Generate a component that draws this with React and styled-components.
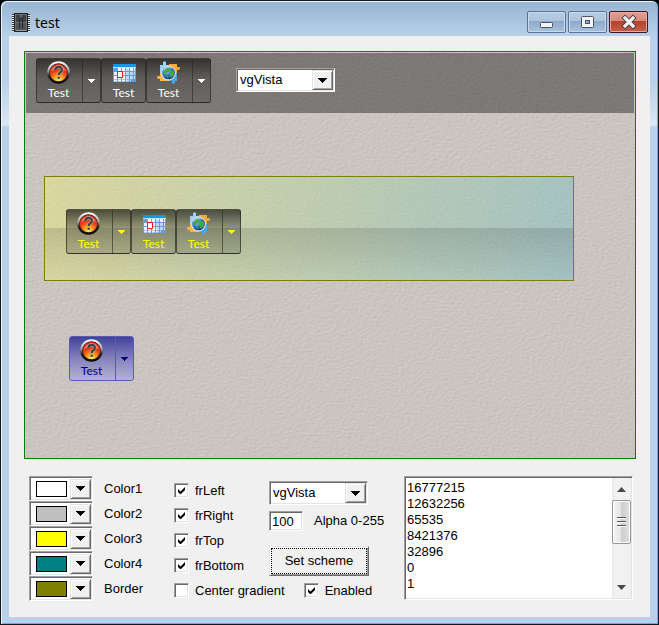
import React from "react";
import styled, { createGlobalStyle, css } from "styled-components";

const COLORS = [
  { label: "Color1", value: "#ffffff" },
  { label: "Color2", value: "#c0c0c0" },
  { label: "Color3", value: "#ffff00" },
  { label: "Color4", value: "#008080" },
  { label: "Border", value: "#808000" },
];

const FRAMES = ["frLeft", "frRight", "frTop", "frBottom"];

const MEMO = "16777215\n12632256\n65535\n8421376\n32896\n0\n1";

const App = () => {
  return (
    <Window>
      <GlobalStyle />
      <TitleBar>
        <ChipIcon />
        <Title>test</Title>
        <CaptionButton aria-label="Minimize">
          <svg width="16" height="16" viewBox="0 0 16 16">
            <rect x="1.500" y="8.500" width="12" height="5" rx="1" fill="#f4f4f4" stroke="#4b5260" />
          </svg>
        </CaptionButton>
        <CaptionButton aria-label="Maximize">
          <svg width="16" height="16" viewBox="0 0 16 16">
            <rect x="1.500" y="2.500" width="12" height="11" rx="1" fill="#f4f4f4" stroke="#4b5260" />
            <rect x="5.500" y="6.500" width="4" height="3" fill="#8fabc9" stroke="#4b5260" />
          </svg>
        </CaptionButton>
        <CaptionButton aria-label="Close" $close>
          <svg width="16" height="16" viewBox="0 0 16 16">
            <path d="M4 4L12 12M12 4L4 12" stroke="#4a3a44" strokeWidth="5" strokeLinecap="square" />
            <path d="M4 4L12 12M12 4L4 12" stroke="#f3f3f3" strokeWidth="3.200" strokeLinecap="square" />
          </svg>
        </CaptionButton>
      </TitleBar>
      <Client>
        <Stage>
          <Texture />
          <TopBar>
            <Toolbar />
            <Combo name="Toolbar scheme" />
          </TopBar>
          <GlassPanel>
            <Toolbar color="#ffff00" />
          </GlassPanel>
          <Single>
            <ToolButton icon={<HelpIcon />} drop blue color="#000080" />
          </Single>
        </Stage>
        <Form>
          <ColorList>
            {COLORS.map((color) => (
              <ColorRow key={color.label}>
                <ColorBox id={color.label} aria-labelledby={`${color.label}-text`}>
                  <Swatch $color={color.value} />
                  <DropFace>
                    <Arrow />
                  </DropFace>
                </ColorBox>
                <label id={`${color.label}-text`} htmlFor={color.label}>
                  {color.label}
                </label>
              </ColorRow>
            ))}
          </ColorList>
          <Options>
            <OptionsTop>
              <FrameList>
                {FRAMES.map((name) => (
                  <Check key={name} label={name} checked />
                ))}
              </FrameList>
              <Scheme>
                <Combo name="Scheme" />
                <AlphaRow>
                  <AlphaInput id="alpha" defaultValue="100" />
                  <label htmlFor="alpha">Alpha 0-255</label>
                </AlphaRow>
                <SetButton>
                  <Focus>Set scheme</Focus>
                </SetButton>
              </Scheme>
            </OptionsTop>
            <OptionsBottom>
              <Check label="Center gradient" />
              <Check label="Enabled" checked />
            </OptionsBottom>
          </Options>
          <Memo>
            <MemoText aria-label="Values" defaultValue={MEMO} />
            <ScrollBar>
              <ScrollArrow />
              <Thumb>
                <svg width="10" height="12" viewBox="0 0 10 12">
                  <path d="M0 1.500H9M0 5.500H9M0 9.500H9" stroke="#555" />
                  <path d="M0 2.500H9M0 6.500H9M0 10.500H9" stroke="#fff" />
                </svg>
              </Thumb>
              <ScrollArrow down />
            </ScrollBar>
          </Memo>
        </Form>
      </Client>
    </Window>
  );
};

export default App;

const Toolbar = ({ color = "#ffffff" }) => (
  <ToolRow>
    <ToolButton icon={<HelpIcon />} drop color={color} />
    <ToolButton icon={<CalendarIcon />} color={color} />
    <ToolButton icon={<PuzzleIcon />} drop color={color} />
  </ToolRow>
);

const ToolButton = ({ icon, drop, blue, color }) => (
  <ToolFrame $blue={blue}>
    <ToolMain $color={color} $drop={drop}>
      {icon}
      Test
    </ToolMain>
    {drop && (
      <ToolDrop aria-label="More" $blue={blue}>
        <Arrow color={color} />
      </ToolDrop>
    )}
  </ToolFrame>
);

const Combo = ({ name }) => (
  <ComboBox>
    <ComboSelect aria-label={name} defaultValue="vgVista">
      <option>vgVista</option>
    </ComboSelect>
    <ComboFace>
      <Arrow />
    </ComboFace>
  </ComboBox>
);

const Check = ({ label, checked }) => (
  <CheckLabel>
    <CheckInput type="checkbox" defaultChecked={checked} />
    <CheckMark viewBox="0 0 9 9">
      <path d="M1 3v3l2 2h1l4-4V1L3.500 5.500z" fill="#000" />
    </CheckMark>
    {label}
  </CheckLabel>
);

const Arrow = ({ color = "#000000" }) => (
  <svg width="9" height="5" viewBox="0 0 9 5" shapeRendering="crispEdges">
    <path d="M0 0h9L4.500 5z" fill={color} />
  </svg>
);

const ScrollArrow = ({ down }) => (
  <ScrollEnd aria-label={down ? "Scroll down" : "Scroll up"}>
    <svg width="9" height="5" viewBox="0 0 9 5">
      <path d={down ? "M0 0h9L4.500 5z" : "M0 5h9L4.500 0z"} fill="#4a4a4a" />
    </svg>
  </ScrollEnd>
);

const Texture = () => (
  <Paper aria-hidden="true">
    <filter id="paper" x="0" y="0" width="100%" height="100%" colorInterpolationFilters="sRGB">
      <feTurbulence type="fractalNoise" baseFrequency="0.32 0.5" numOctaves="2" seed="4" />
      <feDiffuseLighting surfaceScale="0.18" lightingColor="#eae3df">
        <feDistantLight azimuth="235" elevation="60" />
      </feDiffuseLighting>
    </filter>
    <rect width="100%" height="100%" filter="url(#paper)" />
  </Paper>
);

const ChipIcon = () => (
  <svg width="18" height="20" viewBox="0 0 18 20">
    <path d="M1 1v18M17 1v18" stroke="#e8eef4" strokeWidth="2" />
    <path d="M1 1v18M17 1v18" stroke="#333" strokeWidth="2" strokeDasharray="1 1" />
    <rect x="2.500" y="0.500" width="13" height="18" fill="#6c6e70" stroke="#222" />
    <path d="M4 2h4v2h2V2h4v7H4z" fill="#3f4144" />
    <path d="M4 10h10v7H4z" fill="#505255" />
    <path d="M7 5h1v10H7zM10 5h1v10h-1z" fill="#27282a" />
    <path d="M4 17.500h10" stroke="#97999b" />
  </svg>
);

const HelpIcon = () => (
  <svg width="24" height="24" viewBox="0 0 24 24">
    <defs>
      <radialGradient id="ball" cx="0.5" cy="0.95" r="0.95">
        <stop offset="0" stopColor="#fff45a" />
        <stop offset="0.3" stopColor="#ff9a20" />
        <stop offset="0.6" stopColor="#ea3a18" />
        <stop offset="1" stopColor="#c0281a" />
      </radialGradient>
      <linearGradient id="ring" x1="0" y1="0" x2="0" y2="1">
        <stop offset="0" stopColor="#ffffff" />
        <stop offset="0.4" stopColor="#b0b0b0" />
        <stop offset="0.65" stopColor="#252525" />
        <stop offset="1" stopColor="#080808" />
      </linearGradient>
    </defs>
    <circle cx="11.500" cy="11.500" r="11.300" fill="url(#ring)" />
    <circle cx="11.500" cy="11.500" r="9.300" fill="#28100c" />
    <circle cx="11.500" cy="11.500" r="8.800" fill="url(#ball)" />
    <path d="M4 10a8 8 0 0 1 15 0q-7.500-4-15 0" fill="#fff" opacity="0.35" />
    <path d="M8.300 9Q8.500 6 11.700 6T14.800 9Q14.800 10.500 13 11.500Q11.700 12.300 11.700 14M11.700 15.800v2" fill="none" stroke="#c8c4c0" strokeWidth="3.400" />
    <path d="M8.300 9Q8.500 6 11.700 6T14.800 9Q14.800 10.500 13 11.500Q11.700 12.300 11.700 14M11.700 15.800v2" fill="none" stroke="#46403e" strokeWidth="2.400" />
  </svg>
);

const CalendarIcon = () => (
  <svg width="24" height="24" viewBox="0 0 24 24">
    <rect x="1" y="3" width="23" height="18" fill="#6a9ce0" />
    <rect x="1" y="3" width="23" height="3" fill="#1694e8" />
    <path d="M1 6.500H24" stroke="#bce4fa" />
    <g stroke="#f2f8ff" strokeWidth="3" strokeDasharray="3 1">
      <path d="M6 8.500H23" />
      <path d="M2 12.500H23M2 16.500H23" />
      <path d="M2 19.500H19" strokeWidth="2" />
    </g>
    <path d="M13 6.500L24 12v9h-9z" fill="#5c9ae8" opacity="0.35" />
    <rect x="5.500" y="10.500" width="5" height="6" fill="#fff" stroke="#f02020" />
  </svg>
);

const PuzzleIcon = () => (
  <svg width="24" height="24" viewBox="0 0 24 24">
    <defs>
      <radialGradient id="globe" cx="0.35" cy="0.3" r="0.8">
        <stop offset="0" stopColor="#a8e0ff" />
        <stop offset="0.5" stopColor="#2878cc" />
        <stop offset="1" stopColor="#0a2464" />
      </radialGradient>
    </defs>
    <path d="M3 4h3V1q1.500-1.500 3 0v3h4v8H3z" fill="#9dd0f8" />
    <path d="M12 3h8v3h2q2 1 0 3h-2v3h-8z" fill="#fba936" />
    <path d="M3 12h9v8H3v-2H1q-2-2 0-3h2z" fill="#ffb450" />
    <path d="M12 12h8v8h-2v2q-1.500 2-3 0v-2h-3z" fill="#4aa4ea" />
    <circle cx="11.500" cy="12" r="7.500" fill="#d3dfe6" />
    <circle cx="11.500" cy="12" r="6.300" fill="url(#globe)" />
    <path d="M8 8q3-2 5 0l-1 3-3 1-1 2-2-2zM13 9l4 1v4l-3 3-2-4zM9 14l3 2-2 1z" fill="#48a448" />
    <path d="M7 9q3-4 8-2" fill="none" stroke="#fff" opacity="0.5" />
  </svg>
);

const GlobalStyle = createGlobalStyle`
  * {
    box-sizing: border-box;
  }

  body {
    margin: 0;
    background: #000000;
  }

  button, input, select, textarea {
    margin: 0;
    padding: 0;
    font: inherit;
    color: inherit;
  }
`;

const flexBox = (direction, justify, align) => css`
  display: flex;
  flex-direction: ${direction};
  justify-content: ${justify};
  align-items: ${align};
`;

const sunken = css`
  border: 1px solid;
  border-color: #a0a0a0 #ffffff #ffffff #a0a0a0;
  box-shadow: inset 1px 1px #696969, inset -1px -1px #e3e3e3;
  background: #ffffff;
`;

const raised = css`
  border: 1px solid;
  border-color: #e3e3e3 #696969 #696969 #e3e3e3;
  box-shadow: inset 1px 1px #ffffff, inset -1px -1px #a0a0a0;
  background: #f0f0f0;
`;

const Window = styled.div`
  min-height: 100vh;
  padding: 0 7px 7px;
  border: 1px solid #101820;
  border-radius: 7px 7px 0 0;
  box-shadow: inset 1px 1px #ecf6ff, inset -1px -1px #35c5e5;
  background: linear-gradient(#98b4d2, #b9d1ea 36px, #b9d1ea 80px, #dbe7f5 124px, #b9d1ea 126px);
  font: 13px/16px "Liberation Sans", Arial, sans-serif;
  color: #000000;
  ${flexBox("column", "flex-start", "stretch")}
`;

const TitleBar = styled.header`
  height: 35px;
  padding: 10px 3px 0 4px;
  gap: 2px;
  ${flexBox("row", "flex-start", "flex-start")}

  > svg {
    margin-top: 2px;
  }
`;

const Title = styled.h1`
  flex: 1;
  margin: 0 0 0 3px;
  font: 14px/24px "Noto Sans", sans-serif;
`;

const CaptionButton = styled.button`
  width: 39px;
  height: 22px;
  border: 1px solid ${({ $close }) => ($close ? "#431422" : "#5c7596")};
  border-radius: 2px;
  box-shadow: inset 0 0 0 1px ${({ $close }) => ($close ? "#e9a99d" : "#c9daeb")};
  background: ${({ $close }) =>
    $close
      ? "linear-gradient(#e3a196, #d28a7d 45%, #b5412b 46%, #c4604a)"
      : "linear-gradient(#b7cce2, #adc4dc 45%, #8ba9c9 46%, #a9c3de)"};
  ${flexBox("row", "center", "center")}
`;

const Client = styled.main`
  flex: 1;
  margin: 0 1px;
  padding: 15px 14px 14px 15px;
  background: #f0f0f0;
`;

const Stage = styled.section`
  position: relative;
  height: 408px;
  border: 1px solid #008000;
`;

const Paper = styled.svg`
  position: absolute;
  width: 100%;
  height: 100%;
`;

const TopBar = styled.div`
  position: relative;
  height: 60px;
  margin: 1px 1px 0;
  padding: 5px 10px;
  gap: 25px;
  background: rgba(0, 0, 0, 0.39);
  ${flexBox("row", "flex-start", "flex-start")}

  > :last-child {
    margin-top: 10px;
  }
`;

const GlassPanel = styled.div`
  position: relative;
  height: 105px;
  margin: 63px 61px 0 19px;
  padding: 32px 21px;
  border: 1px solid #808000;
  background: linear-gradient(transparent 49%, rgba(0, 0, 0, 0.12) 50%, transparent),
    linear-gradient(100deg, rgba(239, 239, 110, 0.42), rgba(110, 190, 195, 0.42));
`;

const Single = styled.div`
  position: relative;
  margin: 55px 0 0 44px;
  ${flexBox("row", "flex-start", "flex-start")}
`;

const ToolRow = styled.div`
  ${flexBox("row", "flex-start", "flex-start")}
`;

const ToolFrame = styled.div`
  height: 45px;
  border: 1px solid ${({ $blue }) => ($blue ? "#5c5cae" : "rgba(40, 40, 34, 0.68)")};
  border-radius: 3px;
  background: ${({ $blue }) =>
    $blue
      ? "linear-gradient(#41419c, #8482bb 50%, #b5b2d0)"
      : "linear-gradient(rgba(25, 25, 22, 0.72), rgba(30, 30, 25, 0.3) 45%, rgba(40, 40, 34, 0.18))"};
  display: flex;
`;

const ToolMain = styled.button`
  width: ${({ $drop }) => ($drop ? "45px" : "43px")};
  padding: ${({ $drop }) => ($drop ? "2px 2px 0 0" : "2px 0 0")};
  border: 0;
  background: none;
  color: ${({ $color }) => $color};
  font: 12px/15px Lato, sans-serif;
  ${flexBox("column", "flex-start", "center")}
`;

const ToolDrop = styled.button`
  width: 18px;
  border: 0;
  border-left: 1px solid ${({ $blue }) => ($blue ? "#5c5cae" : "rgba(40, 40, 34, 0.6)")};
  background: none;
  ${flexBox("row", "center", "center")}

  svg {
    width: 7px;
    height: 4px;
  }
`;

const ComboBox = styled.div`
  position: relative;
  width: 99px;
  height: 24px;
`;

const ComboSelect = styled.select`
  width: 100%;
  height: 100%;
  padding-left: 3px;
  border-radius: 0;
  appearance: none;
  ${sunken}
`;

const DropFace = styled.span`
  width: 21px;
  height: 20px;
  padding-right: 1px;
  ${raised}
  ${flexBox("row", "center", "center")}
`;

const ComboFace = styled(DropFace)`
  position: absolute;
  top: 2px;
  right: 2px;
  pointer-events: none;
`;

const Form = styled.form`
  padding: 17px 3px 0 5px;
  display: flex;
`;

const ColorList = styled.div`
  width: 145px;
`;

const ColorRow = styled.div`
  height: 25px;
  gap: 11px;
  ${flexBox("row", "flex-start", "center")}
`;

const ColorBox = styled.button.attrs({ type: "button" })`
  width: 64px;
  height: 25px;
  padding: 1px 1px 1px 6px;
  ${sunken}
  ${flexBox("row", "space-between", "center")}
`;

const Swatch = styled.span`
  width: 31px;
  height: 16px;
  border: 1px solid #000000;
  background: ${({ $color }) => $color};
`;

const Options = styled.div`
  width: 230px;
`;

const OptionsTop = styled.div`
  height: 100px;
  display: flex;
`;

const FrameList = styled.div`
  width: 95px;
`;

const OptionsBottom = styled.div`
  gap: 19px;
  display: flex;
`;

const CheckLabel = styled.label`
  position: relative;
  height: 25px;
  padding-top: 4px;
  gap: 6px;
  ${flexBox("row", "flex-start", "center")}
`;

const CheckInput = styled.input`
  width: 15px;
  height: 15px;
  appearance: none;
  ${sunken}
`;

const CheckMark = styled.svg`
  position: absolute;
  left: 3px;
  width: 9px;
  height: 9px;
  pointer-events: none;
  visibility: hidden;

  ${CheckInput}:checked + & {
    visibility: visible;
  }
`;

const Scheme = styled.div`
  padding-top: 5px;
`;

const AlphaRow = styled.div`
  margin: 6px 0 15px;
  gap: 11px;
  ${flexBox("row", "flex-start", "center")}
`;

const AlphaInput = styled.input`
  width: 34px;
  height: 20px;
  padding-left: 2px;
  ${sunken}
`;

const SetButton = styled.button.attrs({ type: "button" })`
  width: 100px;
  height: 30px;
  padding: 1px;
  ${raised}
`;

const Focus = styled.span`
  height: 100%;
  border: 1px dotted #000000;
  ${flexBox("row", "center", "center")}
`;

const Memo = styled.div`
  flex: 1;
  height: 124px;
  padding: 1px;
  display: flex;
  ${sunken}
`;

const MemoText = styled.textarea`
  flex: 1;
  min-width: 0;
  padding: 2px 1px;
  border: 0;
  overflow: hidden;
  resize: none;
  background: none;
`;

const ScrollBar = styled.div`
  width: 19px;
  background: linear-gradient(90deg, #e9e9e9, #f2f2f2 20%, #f0f0f0);
  ${flexBox("column", "flex-start", "stretch")}
`;

const ScrollEnd = styled.button.attrs({ type: "button" })`
  height: 22px;
  border: 0;
  background: none;
  ${flexBox("row", "center", "center")}

  &:last-child {
    margin-top: auto;
  }
`;

const Thumb = styled.div`
  height: 44px;
  border: 1px solid #979797;
  border-radius: 2px;
  box-shadow: inset 0 0 0 1px #ffffff;
  background: linear-gradient(90deg, #f4f4f4, #e6e6e8 45%, #cfcfd2 50%, #dedee0);
  ${flexBox("row", "center", "center")}
`;
